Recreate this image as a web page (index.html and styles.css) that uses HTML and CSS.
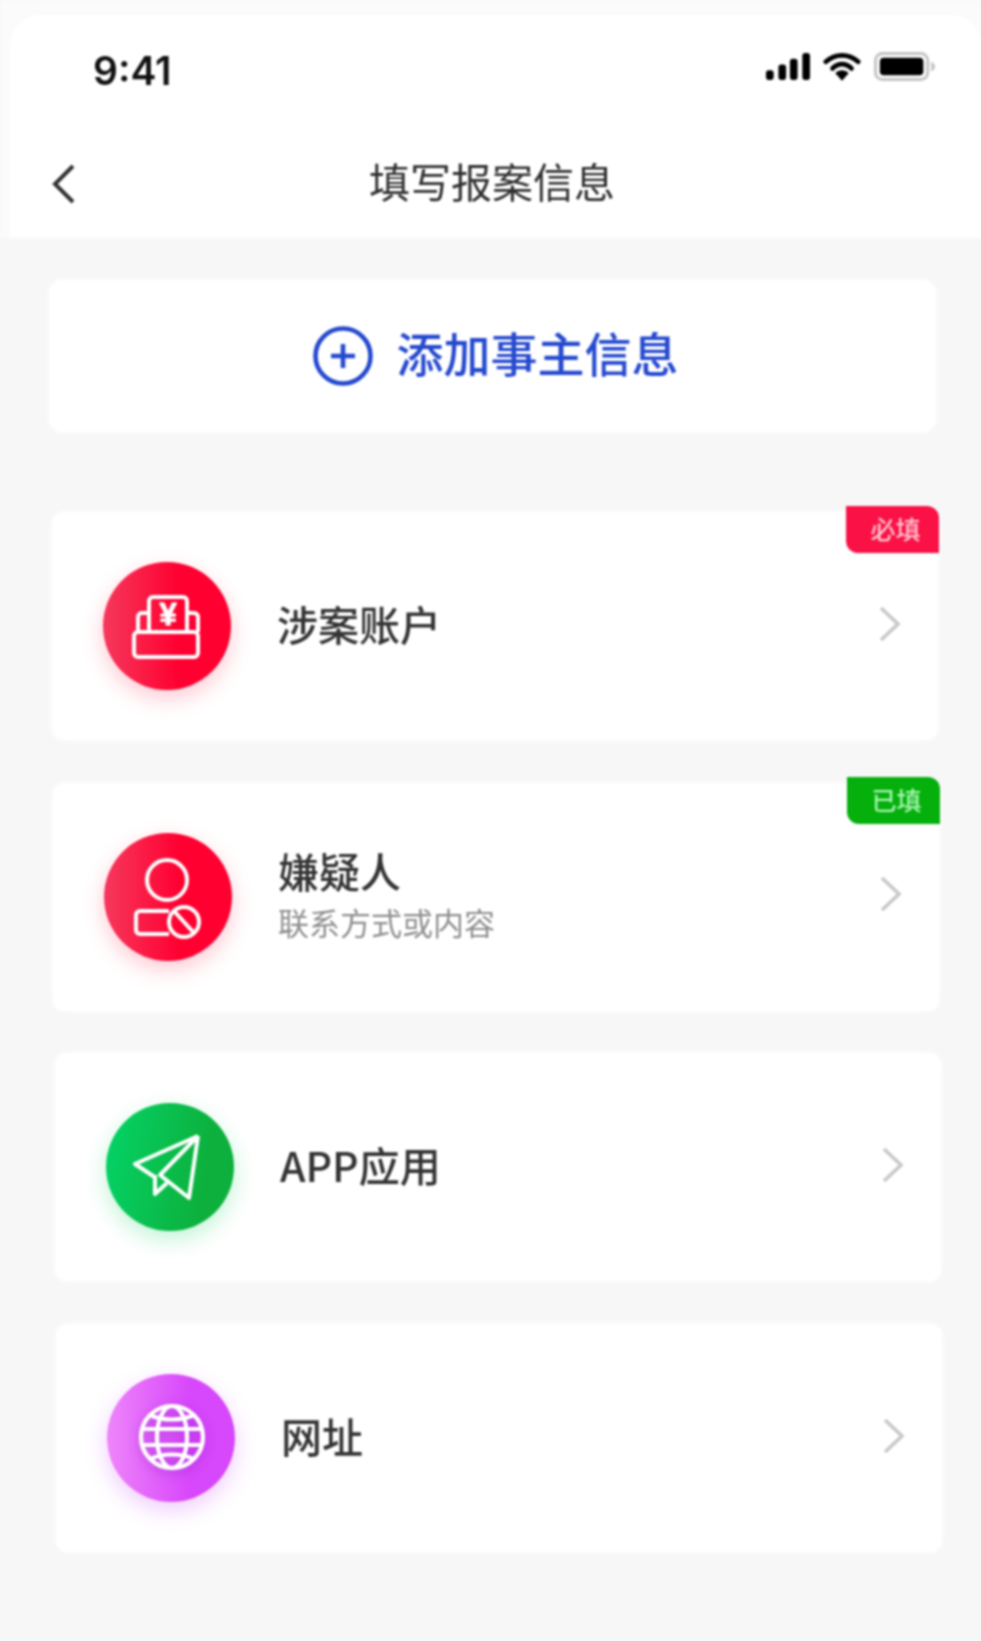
FILE: index.html
```html
<!DOCTYPE html>
<html lang="zh-CN">
<head>
    <meta charset="UTF-8">
    <title>填写报案信息</title>
    <link rel="stylesheet" href="styles.css">
</head>
<body>
    <div class="screen">
        <header class="top">
            <!-- 状态栏 -->
            <div class="status-bar">
                <span class="time">9:41</span>
                <div class="status-icons">
                    <svg class="signal" width="44" height="27" viewBox="0 0 46 28">
                        <rect x="0" y="18" width="8" height="10" rx="3"/>
                        <rect x="13" y="12" width="8" height="16" rx="3"/>
                        <rect x="25" y="6" width="8" height="22" rx="3"/>
                        <rect x="38" y="0" width="8" height="28" rx="3"/>
                    </svg>
                    <svg class="wifi" width="38" height="29" viewBox="0 0 40 30">
                        <path d="M3 10C13 1 27 1 37 10" fill="none" stroke="#000" stroke-width="5" stroke-linecap="round"/>
                        <path d="M10 17C16 11 24 11 30 17" fill="none" stroke="#000" stroke-width="5" stroke-linecap="round"/>
                        <path d="M13 22C17 18 23 18 27 22L20 30Z"/>
                    </svg>
                    <svg class="battery" width="62" height="29" viewBox="0 0 64 30">
                        <rect x="1.5" y="1.5" width="54" height="27" rx="7" fill="none" stroke="#c4c4c4" stroke-width="3"/>
                        <rect x="6" y="6" width="45" height="18" rx="4"/>
                        <path d="M59 10C62 11 63 13 63 15C63 17 62 19 59 20Z" fill="#c4c4c4"/>
                    </svg>
                </div>
            </div>
            <!-- 导航 -->
            <nav class="nav">
                <svg class="back" width="24" height="40" viewBox="0 0 24 40">
                    <path d="M21 2L3 20L21 38" fill="none" stroke="#333" stroke-width="4"/>
                </svg>
                <h1 class="nav-title">填写报案信息</h1>
                <span></span>
            </nav>
        </header>

        <main class="content">
            <div class="add-card">
                <svg width="60" height="60" viewBox="0 0 60 60">
                    <circle cx="30" cy="30" r="27.5" fill="none" stroke="#2549cf" stroke-width="4.6"/>
                    <path d="M18 30H42M30 18V42" fill="none" stroke="#2549cf" stroke-width="4.6"/>
                </svg>
                <span class="add-text">添加事主信息</span>
            </div>

            <ul class="rows">
                <li class="row shift-1">
                    <span class="badge badge-red">必填</span>
                    <div class="circle circle-red">
                        <svg width="128" height="128" viewBox="0 0 128 128" fill="none" stroke="#fff" stroke-width="4" stroke-linejoin="round">
                            <rect x="31" y="70" width="64" height="25" rx="4"/>
                            <path d="M46 70V39a4 4 0 0 1 4-4H80a4 4 0 0 1 4 4V70"/>
                            <path d="M46 51H39a4 4 0 0 0-4 4V70M84 51H91a4 4 0 0 1 4 4V70"/>
                            <text class="yen" x="65" y="63" text-anchor="middle">¥</text>
                        </svg>
                    </div>
                    <div class="row-text">
                        <div class="row-title">涉案账户</div>
                    </div>
                    <svg class="chevron" width="22" height="36" viewBox="0 0 22 36">
                        <path d="M2 2L19 18L2 34" fill="none" stroke="#c8c8c8" stroke-width="3.6"/>
                    </svg>
                </li>

                <li class="row shift-2">
                    <span class="badge badge-green">已填</span>
                    <div class="circle circle-red">
                        <svg width="128" height="128" viewBox="0 0 128 128" fill="none" stroke="#fff" stroke-width="4">
                            <circle cx="63" cy="47" r="20"/>
                            <path d="M65 78H36a4 4 0 0 0-4 4V97a4 4 0 0 0 4 4H65"/>
                            <circle cx="80" cy="89" r="15"/>
                            <path d="M70 78L90 100"/>
                        </svg>
                    </div>
                    <div class="row-text">
                        <div class="row-title">嫌疑人</div>
                        <div class="row-sub">联系方式或内容</div>
                    </div>
                    <svg class="chevron" width="22" height="36" viewBox="0 0 22 36">
                        <path d="M2 2L19 18L2 34" fill="none" stroke="#c8c8c8" stroke-width="3.6"/>
                    </svg>
                </li>

                <li class="row shift-3">
                    <div class="circle circle-green">
                        <svg width="128" height="128" viewBox="0 0 128 128" fill="none" stroke="#fff" stroke-width="4" stroke-linejoin="round">
                            <path d="M92 33L29 61L50 75"/>
                            <path d="M92 33L83 95L54 72L92 33"/>
                            <path d="M49 72V91L61 80"/>
                        </svg>
                    </div>
                    <div class="row-text">
                        <div class="row-title">APP应用</div>
                    </div>
                    <svg class="chevron" width="22" height="36" viewBox="0 0 22 36">
                        <path d="M2 2L19 18L2 34" fill="none" stroke="#c8c8c8" stroke-width="3.6"/>
                    </svg>
                </li>

                <li class="row shift-4">
                    <div class="circle circle-purple">
                        <svg class="globe" width="128" height="128" viewBox="0 0 128 128" fill="none" stroke="#fff" stroke-width="4.2">
                            <circle cx="65" cy="63" r="31"/>
                            <ellipse cx="65" cy="63" rx="15" ry="31"/>
                            <path d="M34 55H96M34 71H96M43 41C56 47 74 47 87 41M43 85C56 79 74 79 87 85"/>
                        </svg>
                    </div>
                    <div class="row-text">
                        <div class="row-title">网址</div>
                    </div>
                    <svg class="chevron" width="22" height="36" viewBox="0 0 22 36">
                        <path d="M2 2L19 18L2 34" fill="none" stroke="#c8c8c8" stroke-width="3.6"/>
                    </svg>
                </li>
            </ul>
        </main>
    </div>
</body>
</html>
```
FILE: styles.css
```css
* {
    box-sizing: border-box;
}
html, body {
    margin: 0;
    padding: 0;
    background: #f7f7f7;
}
body {
    font-family: "Noto Sans CJK SC", "Noto Sans", sans-serif;
    color: #333;
}
.screen {
    min-height: 1641px;
    padding-top: 15px;
    background: linear-gradient(#fbfbfb 0, #fbfbfb 238px, #f7f7f7 238px);
    filter: blur(0.8px);
}

/* 顶部 */
.top {
    height: 223px;
    margin-left: 10px;
    background: #fff;
    border-radius: 30px 30px 0 0;
}
.status-bar {
    height: 110px;
    padding: 0 43px 0 83px;
    display: flex;
    align-items: center;
    justify-content: space-between;
}
.time {
    font-family: Inter, "Liberation Sans", sans-serif;
    font-size: 39px;
    font-weight: 600;
    color: #111;
}
.status-icons {
    display: flex;
    align-items: center;
    gap: 13px;
    margin-top: -8px;
    margin-right: 2px;
}
.nav {
    height: 113px;
    padding: 0 49px 0 42px;
    display: grid;
    grid-template-columns: 1fr auto 1fr;
    align-items: center;
}
.back {
    margin-top: 4px;
}
.nav-title {
    margin: 0 0 4px;
    font-size: 41px;
    font-weight: 400;
    line-height: 50px;
    color: #2e2e2e;
}

/* 添加事主 */
.content {
    padding-top: 42px;
}
.add-card {
    height: 152px;
    margin: 0 45px 0 49px;
    padding-left: 6px;
    background: #fff;
    border-radius: 14px;
    box-shadow: 0 0 6px #fff;
    display: flex;
    align-items: center;
    justify-content: center;
    gap: 24px;
}
.add-text {
    margin-bottom: 10px;
    font-size: 47px;
    font-weight: 500;
    color: #2549cf;
}

/* 列表 */
.rows {
    list-style: none;
    margin: 80px 0 0;
    padding: 0;
    display: flex;
    flex-direction: column;
    gap: 42.7px;
}
.row {
    position: relative;
    width: 886px;
    height: 228px;
    padding: 0 37px 0 51px;
    background: #fff;
    border-radius: 12px;
    box-shadow: 0 0 6px #fff;
    display: flex;
    align-items: center;
}
.shift-1 { margin-left: 52px; }
.shift-2 { margin-left: 53px; }
.shift-3 { margin-left: 55px; }
.shift-4 { margin-left: 56px; }

.badge {
    position: absolute;
    top: -6px;
    right: -1px;
    width: 93px;
    height: 47px;
    padding-left: 6px;
    border-radius: 0 12px 0 12px;
    font-size: 25px;
    font-weight: 500;
    line-height: 45px;
    text-align: center;
}
.badge-red {
    background: #fa1246;
    color: #ffc4d0;
}
.badge-green {
    background: #05b00c;
    color: #a8f5b0;
}

.circle {
    flex: none;
    width: 128px;
    height: 128px;
    border-radius: 50%;
}
.circle svg {
    display: block;
}
.circle-red {
    background: linear-gradient(90deg, #f5385c, #ff0030 60%);
    box-shadow: 0 8px 22px rgba(255, 0, 50, 0.22);
}
.circle-green {
    background: linear-gradient(100deg, #04d468, #0db03c 75%);
    box-shadow: 0 8px 22px rgba(0, 210, 90, 0.25);
}
.circle-purple {
    background: linear-gradient(90deg, #ee85fa, #d747fb 65%);
    box-shadow: 0 8px 22px rgba(200, 70, 250, 0.28);
}
.globe {
    filter: drop-shadow(0 3px 6px rgba(130, 20, 190, 0.4));
}
.yen {
    font-family: "Liberation Sans", sans-serif;
    font-size: 31px;
    font-weight: 700;
    fill: #fff;
    stroke: #fff;
    stroke-width: 1;
}

.row-text {
    flex: 1;
    margin-left: 46px;
    padding-bottom: 6px;
}
.row-title {
    font-size: 41px;
    font-weight: 500;
    line-height: 50px;
    color: #333;
}
.row-sub {
    margin-top: 7px;
    font-size: 31px;
    line-height: 40px;
    color: #8e8e8e;
}
.chevron {
    flex: none;
    margin-top: -5px;
}
```
